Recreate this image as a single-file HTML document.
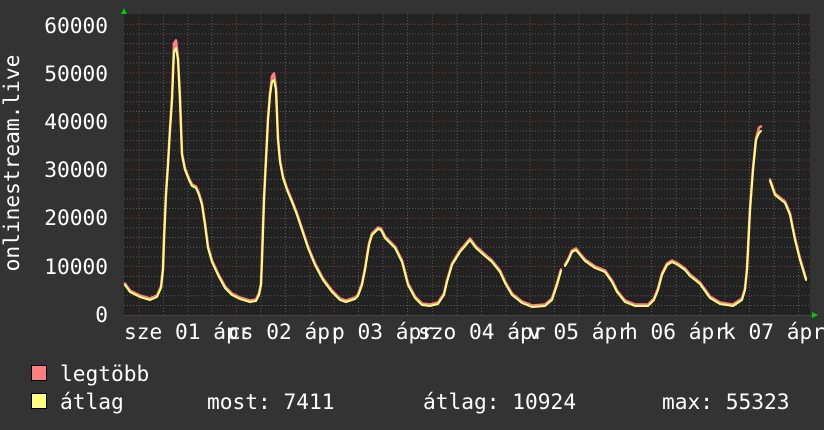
<!DOCTYPE html>
<html><head><meta charset="utf-8"><style>
html,body{margin:0;padding:0;background:#333333;}
svg{display:block;}
text{font-family:"DejaVu Sans Mono","Liberation Mono",monospace;font-size:21.2px;fill:#ffffff;}
</style></head><body>
<svg width="824" height="430" viewBox="0 0 824 430" xmlns="http://www.w3.org/2000/svg">
<rect x="0" y="0" width="824" height="430" fill="#333333"/>
<rect x="124" y="14" width="686" height="302" fill="#222222"/>
<g stroke="#5a5a5a" stroke-width="1" stroke-dasharray="1,2">
<path d="M124 305.5H810M124 295.8H810M124 286.1H810M124 276.4H810M124 256.9H810M124 247.2H810M124 237.5H810M124 227.8H810M124 208.5H810M124 198.8H810M124 189.1H810M124 179.4H810M124 160H810M124 150.3H810M124 140.6H810M124 130.9H810M124 111.5H810M124 101.8H810M124 92.1H810M124 82.4H810M124 63H810M124 53.3H810M124 43.6H810M124 33.9H810M124 24.2H810"/>
<path d="M163.5 14V315M188 14V315M212 14V315M261 14V315M285.5 14V315M310 14V315M358.5 14V315M383 14V315M407.5 14V315M457 14V315M481.5 14V315M506 14V315M554.5 14V315M579 14V315M603.5 14V315M651.5 14V315M676 14V315M700.5 14V315M749.5 14V315M774 14V315M798.5 14V315"/>
</g>
<g stroke="#7a3a3a" stroke-width="1" stroke-dasharray="1,2">
<path d="M124 266.5H810M124 218.2H810M124 169.7H810M124 121.2H810M124 72.7H810M124 24.5H810"/>
<path d="M139 14V315M236.5 14V315M334 14V315M432.5 14V315M530 14V315M627 14V315M725 14V315"/>
</g>
<path d="M124 315.5H812" stroke="#444" stroke-width="1"/>
<polygon points="121,14 127,14 124,8" fill="#00cc00"/>
<polygon points="812,312 812,318 818,315" fill="#00cc00"/>
<g fill="none" stroke-linejoin="round" stroke-linecap="round">
<g stroke="#ff7f7f" stroke-width="2.6" transform="translate(0,-1.5)">
<polyline points="125,285 130,292 140,297 150,300 157,297 161,288 163,270 164,240 166,195 168,165 170,130 172,100 174,45 176,42 178,60 180,100 182,155 185,170 189,180 192,186 196,188 199,195 202,205 205,225 208,248 212,262 218,275 225,288 232,295 240,299 250,302 256,301 259,295 261,285 262,260 264,200 266,160 268,120 270,95 272,78 274,75 276,90 278,140 280,162 283,178 287,190 292,202 297,215 302,230 308,248 315,265 323,280 332,292 340,300 346,302 355,299 358,296 362,285 365,270 369,245 372,235 378,229 381,230 385,238 395,248 402,262 408,285 415,298 422,305 430,306 438,304 444,295 447,282 452,265 460,252 466,245 470,240 476,248 485,256 492,262 500,272 505,283 512,295 522,303 532,307 545,306 552,300 557,285 561,271"/>
<polyline points="565,266 568,261 572,252 576,250 580,255 585,261 595,268 605,272 612,282 617,292 625,302 635,306 648,306 654,300 658,290 662,275 667,265 672,262 678,265 685,270 690,276 700,284 710,298 720,304 733,306 742,300 745,290 747,270 750,210 753,170 756,140 759,129 761,128"/>
<polyline points="770,181 775,195 785,203 790,215 795,240 800,260 806,280"/>
</g>
<g stroke="#ffff7f" stroke-width="2">
<polyline points="125,285 130,292 140,297 150,300 157,297 161,288 163,270 164,240 166,195 168,165 170,130 172,100 174,52 176,48 178,60 180,100 182,155 185,170 189,180 192,186 196,188 199,195 202,205 205,225 208,248 212,262 218,275 225,288 232,295 240,299 250,302 256,301 259,295 261,285 262,260 264,200 266,160 268,120 270,95 272,82 274,80 276,90 278,140 280,162 283,178 287,190 292,202 297,215 302,230 308,248 315,265 323,280 332,292 340,300 346,302 355,299 358,296 362,285 365,270 369,245 372,235 378,229 381,230 385,238 395,248 402,262 408,285 415,298 422,305 430,306 438,304 444,295 447,282 452,265 460,252 466,245 470,240 476,248 485,256 492,262 500,272 505,283 512,295 522,303 532,307 545,306 552,300 557,285 561,271"/>
<polyline points="565,266 568,261 572,252 576,250 580,255 585,261 595,268 605,272 612,282 617,292 625,302 635,306 648,306 654,300 658,290 662,275 667,265 672,262 678,265 685,270 690,276 700,284 710,298 720,304 733,306 742,300 745,290 747,270 750,210 753,170 756,140 759,133 761,131"/>
<polyline points="770,181 775,195 785,203 790,215 795,240 800,260 806,280"/>
</g>
</g>
<g text-anchor="end">
<text x="108" y="33">60000</text>
<text x="108" y="81">50000</text>
<text x="108" y="129">40000</text>
<text x="108" y="177">30000</text>
<text x="108" y="225">20000</text>
<text x="108" y="274">10000</text>
<text x="108" y="322">0</text>
</g>
<text transform="translate(19,163) rotate(-90)" text-anchor="middle">onlinestream.live</text>
<text x="124" y="339">sze 01 ápr</text>
<text x="228" y="339">cs 02 ápr</text>
<text x="332" y="339">p 03 ápr</text>
<text x="418" y="339">szo 04 ápr</text>
<text x="528" y="339">v 05 ápr</text>
<text x="625" y="339">h 06 ápr</text>
<text x="723" y="339">k 07 ápr</text>
<rect x="31.5" y="365.5" width="15" height="15" fill="#ff7f7f" stroke="#000" stroke-width="1"/>
<rect x="31.5" y="393.5" width="15" height="15" fill="#ffff7f" stroke="#000" stroke-width="1"/>
<text x="60" y="381">legtöbb</text>
<text x="60" y="409">átlag</text>
<text x="207" y="409">most: 7411</text>
<text x="423" y="409">átlag: 10924</text>
<text x="662" y="409">max: 55323</text>
</svg>
</body></html>
